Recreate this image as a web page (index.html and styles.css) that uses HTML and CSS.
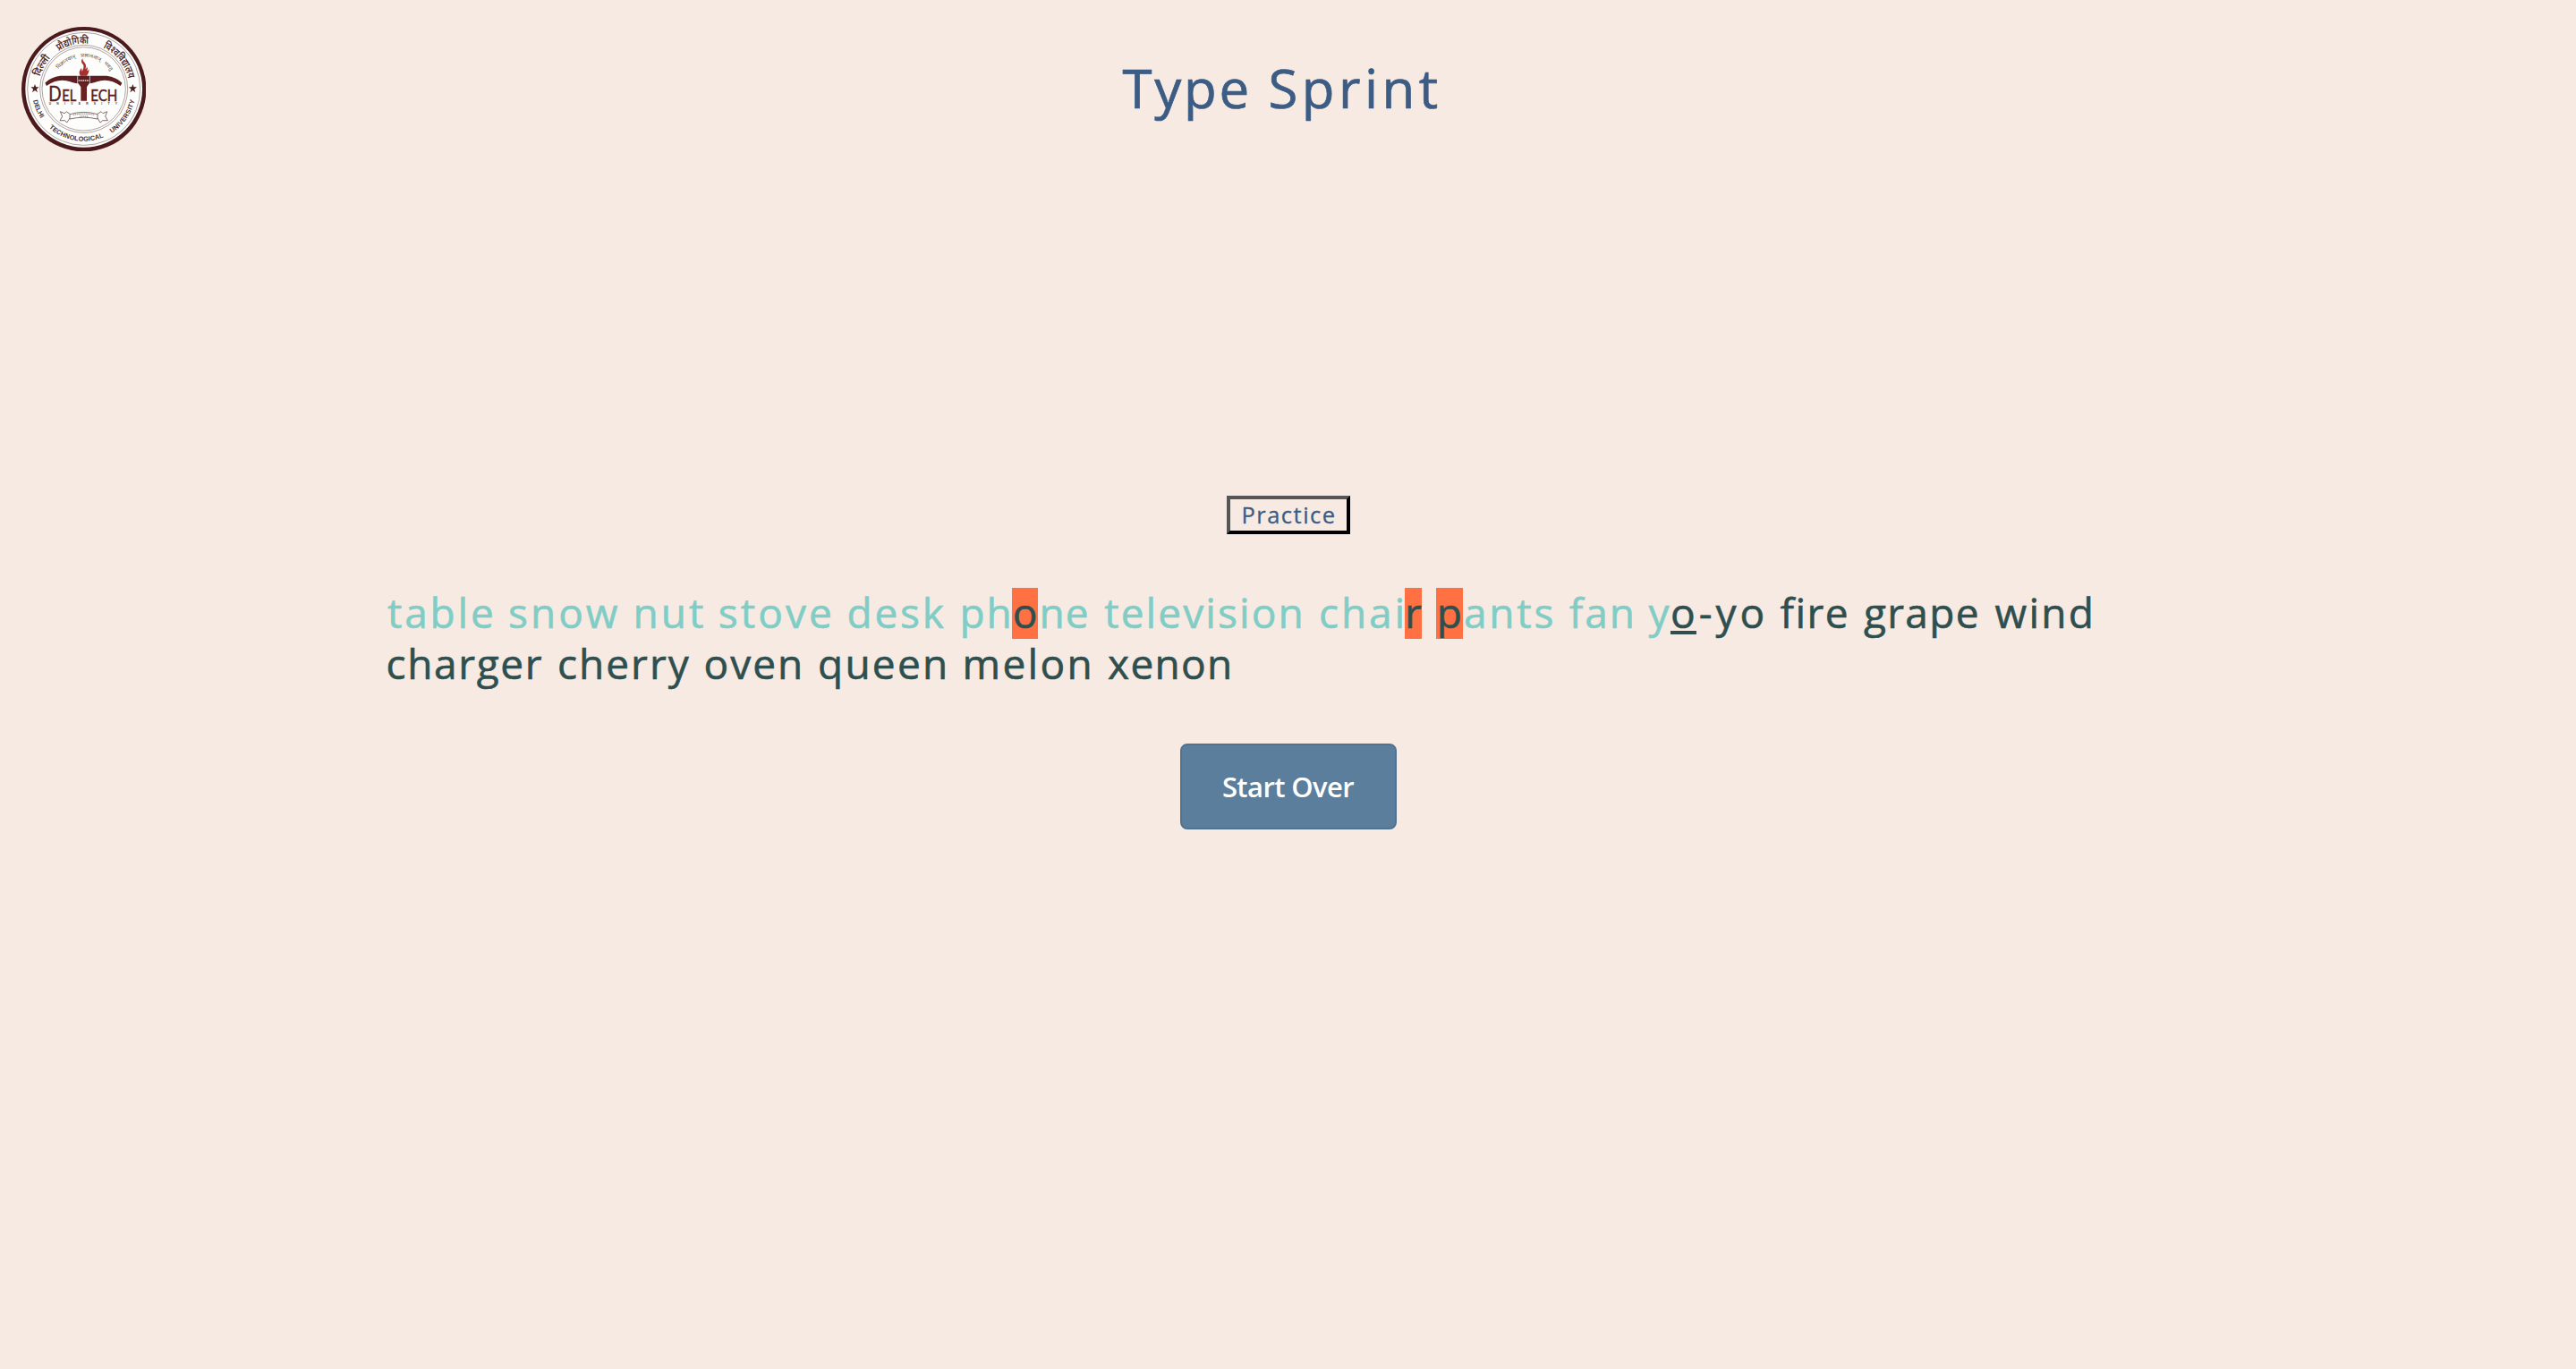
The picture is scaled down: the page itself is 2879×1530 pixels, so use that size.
FILE: index.html
```html
<!DOCTYPE html>
<html lang="en">
<head>
<meta charset="utf-8">
<title>Type Sprint</title>
<link rel="stylesheet" href="styles.css">
</head>
<body>
<header class="header">
  <svg class="logo" viewBox="42 30 418 418" role="img" aria-label="Delhi Technological University">
    <defs>
      <path id="arc-top" d="M98 239a153 153 0 0 1 306 0"/>
      <path id="arc-motto" d="M143 239a108 108 0 0 1 216 0"/>
      <path id="arc-bottom" d="M77 239a174 174 0 0 0 348 0"/>
    </defs>
    <circle cx="251" cy="239" r="209" fill="#4b1a1c"/>
    <circle cx="251" cy="238" r="196" fill="#fdfdfc"/>
    <circle class="line" cx="251" cy="238" r="189"/>
    <circle class="line" cx="251" cy="238" r="147"/>
    <circle class="line" cx="251" cy="238" r="140"/>
    <g class="hindi">
      <text><textPath href="#arc-top" startOffset="43" textLength="72" lengthAdjust="spacingAndGlyphs">दिल्ली</textPath></text>
      <text><textPath href="#arc-top" startOffset="151" textLength="105" lengthAdjust="spacingAndGlyphs">प्रौद्योगिकी</textPath></text>
      <text><textPath href="#arc-top" startOffset="307" textLength="138" lengthAdjust="spacingAndGlyphs">विश्वविद्यालय</textPath></text>
    </g>
    <g class="motto">
      <text><textPath href="#arc-motto" startOffset="72" textLength="70" lengthAdjust="spacingAndGlyphs">विज्ञानवान्</textPath></text>
      <text><textPath href="#arc-motto" startOffset="159" textLength="68" lengthAdjust="spacingAndGlyphs">प्रज्ञानवान्</textPath></text>
      <text><textPath href="#arc-motto" startOffset="240" textLength="34" lengthAdjust="spacingAndGlyphs">भवतु</textPath></text>
    </g>
    <g class="english">
      <text><textPath href="#arc-bottom" startOffset="38" textLength="66">DELHI</textPath></text>
      <text><textPath href="#arc-bottom" startOffset="145" textLength="197">TECHNOLOGICAL</textPath></text>
      <text><textPath href="#arc-bottom" startOffset="371" textLength="138">UNIVERSITY</textPath></text>
    </g>
    <g fill="#4b2222">
      <path id="star" d="M87 222l3.500 10h10l-8 7 3.500 11-9-7-9 7 3.500-11-8-7h10z"/>
      <use href="#star" x="328"/>
    </g>
    <path fill="#a8302b" d="M240 194c-9-13 0-20 3-27 2 5 0 9 2 12 5-9 9-20 0-27-4-6-2-11 2-16 0 8 3 10 8 16 5 7 3 14 1 20 4-2 5-6 4-10 5 7 4 12 1 16 4-1 6-4 7-7 1 10-3 19-8 23z"/>
    <path fill="#5e1f20" d="M121 218c18-17 38-24 60-24h138c22 0 42 7 60 24l-5 10c-18-13-34-19-53-19-19 0-34 9-51 11h-40c-17-2-32-11-51-11-19 0-35 6-53 19z"/>
    <path stroke="#fdfdfc" stroke-width="2" d="M230 193v28M271 193v28"/>
    <path fill="#6a2021" d="M232 219h37l-8 13v46h-20v-46z"/>
    <path stroke="#e6d5d0" stroke-width="5" stroke-dasharray="5 2" d="M233 210h36"/>
    <g class="deltech">
      <text class="big" x="133" y="279" textLength="43" lengthAdjust="spacingAndGlyphs">D</text>
      <text x="178" y="279" textLength="48" lengthAdjust="spacingAndGlyphs">EL</text>
      <text x="274" y="279" textLength="90" lengthAdjust="spacingAndGlyphs">ECH</text>
    </g>
    <text class="small" x="134" y="292" textLength="229">UNIVERSITY</text>
    <g class="ribbon">
      <path d="M204 323q47-14 93 0v16q-47-11-93 0zM204 322l-11-8-7 6-14-6 7 16-8 14h17l6 7 10-15M297 322l12-8 6 6 14-6-6 16 8 14h-17l-8 7-9-15"/>
      <path stroke-dasharray="4 2" d="M215 325q36-7 72 0M237 330h30"/>
    </g>
  </svg>
  <h1 class="title"><span class="type">Type</span><span class="sprint">Sprint</span></h1>
</header>
<main class="main">
  <button class="mode">Practice</button>
  <div class="words">
    <div class="row typed">
      <span class="w w-table">table</span><span class="w w-snow">snow</span><span class="w w-nut">nut</span><span class="w w-stove">stove</span><span class="w w-desk">desk</span><span class="w w-ph">ph</span><span class="w wrong w-o">o</span><span class="w w-ne">ne</span><span class="w w-television">television</span><span class="w w-chai">chai</span><span class="w wrong w-r">r</span><span class="w wrong w-p">p</span><span class="w w-ants">ants</span><span class="w w-fan">fan</span><span class="w w-y">y</span><span class="w todo current">o</span><span class="w todo w-yo">-yo</span><span class="w todo w-fire">fire</span><span class="w todo w-grape">grape</span><span class="w todo w-wind">wind</span>
    </div>
    <div class="row second">
      <span class="w w-charger">charger</span><span class="w w-cherry">cherry</span><span class="w w-oven">oven</span><span class="w w-queen">queen</span><span class="w w-melon">melon</span><span class="w w-xenon">xenon</span>
    </div>
  </div>
  <button class="restart">Start Over</button>
</main>
</body>
</html>
```
FILE: styles.css
```css
* { box-sizing: border-box; }
body {
  margin: 0;
  min-height: 100vh;
  background: #f7eae2;
  font-family: "Open Sans", "Noto Sans", sans-serif;
}

.header {
  display: grid;
  grid-template-columns: 1fr auto 1fr;
  align-items: center;
  height: 199px;
  padding: 0 24px;
}
.logo { width: 139.4px; height: 139.4px; }
.line { fill: none; stroke: #8a7573; stroke-width: 2; }
.hindi { font: 600 35px "Noto Sans", sans-serif; fill: #4b2a2a; }
.motto { font: 17px "Noto Sans", sans-serif; fill: #6b5552; }
.english { font: bold 22px "Liberation Sans", sans-serif; fill: #4a3030; }
.deltech { font: 400 50px Lato, sans-serif; fill: #5a1d1e; stroke: #5a1d1e; stroke-width: 1.5; }
.deltech .big { font-size: 67px; }
.small { font: bold 10px "Liberation Sans", sans-serif; fill: #4a3030; }
.ribbon { fill: none; stroke: #6b5552; stroke-width: 2.5; }

.title {
  display: flex;
  margin: 0 0 3px -13px;
  font-size: 60px;
  font-weight: 400;
  line-height: 80px;
  color: #3d5c84;
  -webkit-text-stroke: .7px;
}
.type { width: 163px; letter-spacing: 2.7px; }
.sprint { letter-spacing: 4.4px; }

.main {
  display: flex;
  flex-direction: column;
  align-items: center;
  padding-top: 355px;
}
.mode {
  width: 138px;
  height: 43px;
  padding: 0 0 2px 2px;
  border: 4px solid;
  border-color: #555 #000 #000 #555;
  background: transparent;
  font: 25.5px/30px "Open Sans", sans-serif;
  letter-spacing: 1.5px;
  color: #3d5c84;
  -webkit-text-stroke: .3px;
}
.words {
  align-self: stretch;
  margin: 60px 0;
  padding-left: 433px;
  font-size: 46px;
  line-height: 54px;
  color: #2f4f4f;
  -webkit-text-stroke: .6px;
}
.row { display: flex; height: 57px; }
.second { margin-left: -1.5px; }
.typed { color: #81cdc6; }
.w { flex: none; width: var(--w); letter-spacing: var(--ls, 0); white-space: nowrap; }
.todo { color: #2f4f4f; }
.wrong { color: #2f4f4f; background: #ff7043; }
.current {
  --w: 29px;
  --ls: 1.3px;
  text-decoration: underline;
  text-decoration-thickness: 4px;
  text-underline-offset: 3px;
}

/* word advances and tracking */
.w-table { --w: 135px; --ls: 2.8px; }
.w-snow { --w: 139.5px; --ls: 3px; }
.w-nut { --w: 95.2px; --ls: 3px; }
.w-stove { --w: 143.8px; --ls: 3.1px; }
.w-desk { --w: 126px; --ls: 2.8px; }
.w-ph { --w: 58.5px; --ls: 1.9px; }
.w-o { --w: 29px; padding-left: .8px; }
.w-ne { --w: 74.2px; --ls: 1px; padding-left: 1.5px; }
.w-television { --w: 239.8px; --ls: 2.1px; }
.w-chai { --w: 96px; --ls: 2.9px; }
.w-r { --w: 19px; margin-right: 16px; }
.w-p { --w: 30px; padding-left: .8px; }
.w-ants { --w: 118.7px; --ls: 2.8px; padding-left: 1px; }
.w-fan { --w: 88.8px; --ls: 2px; }
.w-y { --w: 24.5px; }
.w-yo { --w: 93.5px; --ls: 4px; padding-left: 2.8px; }
.w-fire { --w: 93.5px; --ls: 1.5px; }
.w-grape { --w: 146.5px; --ls: 1.3px; }
.w-wind { --ls: 2.3px; }
.w-charger { --w: 191.5px; --ls: 1.65px; }
.w-cherry { --w: 163.5px; --ls: 2px; }
.w-oven { --w: 127.5px; --ls: 2px; }
.w-queen { --w: 161.5px; --ls: 2.25px; }
.w-melon { --w: 162.5px; --ls: 2.3px; }
.w-xenon { --ls: 1.3px; }

.restart {
  width: 242px;
  height: 96px;
  padding: 0;
  border: 2px solid #507392;
  border-radius: 8px;
  background: #5b7e9c;
  font: 600 31px/40px "Open Sans", sans-serif;
  letter-spacing: -.6px;
  color: #fff;
}
```
